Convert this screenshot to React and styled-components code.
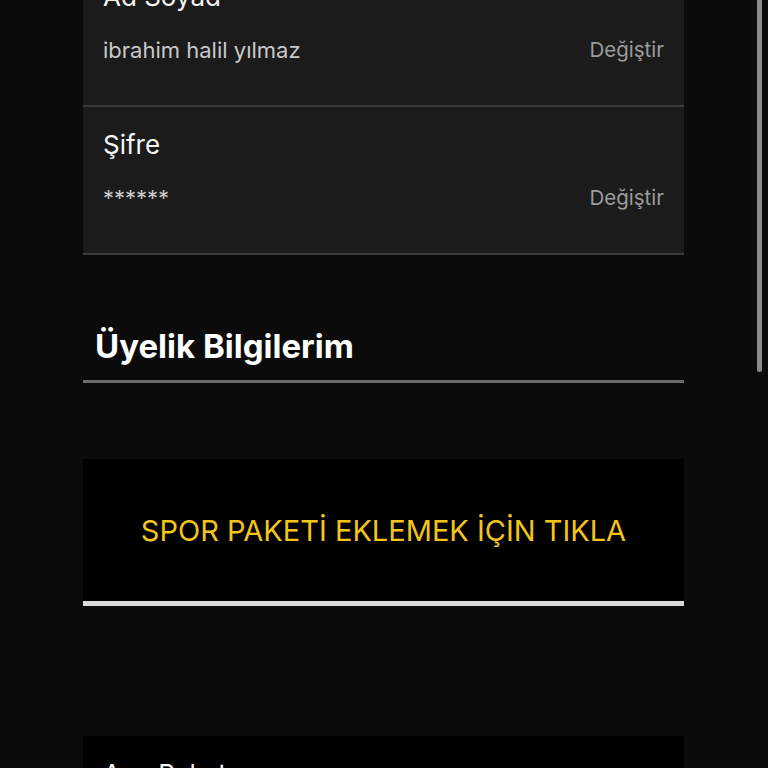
import React, { useLayoutEffect, useRef } from 'react';
import styled, { createGlobalStyle } from 'styled-components';

const GlobalStyle = createGlobalStyle`
  html, body {
    margin: 0;
    padding: 0;
    background: #0b0b0b;
    font-family: Inter, "Noto Sans", sans-serif;
    overflow: hidden;
  }
`;

const Viewport = styled.div`
  position: relative;
  height: 100vh;
`;

const Scroller = styled.div`
  height: 100%;
  overflow: hidden;
`;

const ScrollThumb = styled.div`
  position: absolute;
  top: 0;
  right: 6px;
  width: 5px;
  height: 372px;
  border-radius: 0 0 3px 3px;
  background: #8a8a8a;
`;

const Page = styled.main`
  padding: 40px 84px 120px 83px;
  display: flex;
  flex-direction: column;
`;

const SectionTitle = styled.h2`
  margin: ${({ $first }) => ($first ? '0' : '71px')} 0 76px;
  padding: 0 12px 14px;
  font-size: 33px;
  line-height: 40px;
  font-weight: 700;
  color: #ffffff;
  border-bottom: 3px solid #6b6b6b;
`;

const Card = styled.section`
  background: ${({ $dark }) => ($dark ? '#000000' : '#1b1b1b')};
  display: flex;
  flex-direction: column;
`;

const Row = styled.div`
  padding: 25px 20px 43px;
  border-bottom: 2px solid #3b3b3b;
`;

const RowTitle = styled.div`
  font-size: 26px;
  line-height: 26px;
  color: #f4f4f4;
`;

const RowBody = styled.div`
  margin-top: 28px;
  display: flex;
  align-items: center;
  justify-content: space-between;
  line-height: 24px;
`;

const Value = styled.span`
  font-size: 22px;
  color: #c9c9c9;
`;

const Action = styled.span`
  font-size: 20.5px;
  color: #9c9c9c;
  cursor: pointer;
`;

const AddButton = styled.button`
  height: 147px;
  border: 0;
  border-bottom: 5px solid #d9d9d9;
  background: #000000;
  color: #f3c51b;
  font-family: Inter, "Noto Sans", sans-serif;
  font-size: 29px;
  cursor: pointer;
`;

const Spacer = styled.div`
  height: 130px;
`;

const InfoRow = ({ title, value, action }) => (
  <Row>
    <RowTitle>{title}</RowTitle>
    <RowBody>
      <Value>{value}</Value>
      {action && <Action>{action}</Action>}
    </RowBody>
  </Row>
);

export default function App() {
  const scroller = useRef(null);

  useLayoutEffect(() => {
    if (scroller.current) scroller.current.scrollTop = 214;
  }, []);

  return (
    <Viewport>
      <GlobalStyle />
      <Scroller ref={scroller}>
        <Page>
          <SectionTitle $first>Kişisel Bilgilerim</SectionTitle>
          <Card>
            <InfoRow title="Ad Soyad" value="ibrahim halil yılmaz" action="Değiştir" />
            <InfoRow title="Şifre" value="******" action="Değiştir" />
          </Card>
          <SectionTitle>Üyelik Bilgilerim</SectionTitle>
          <AddButton>SPOR PAKETİ EKLEMEK İÇİN TIKLA</AddButton>
          <Spacer />
          <Card $dark>
            <InfoRow title="Ana Paket" value="Süper Lig Paketi" />
            <InfoRow title="Bitiş Tarihi" value="31.05.2025" />
          </Card>
        </Page>
      </Scroller>
      <ScrollThumb />
    </Viewport>
  );
}
